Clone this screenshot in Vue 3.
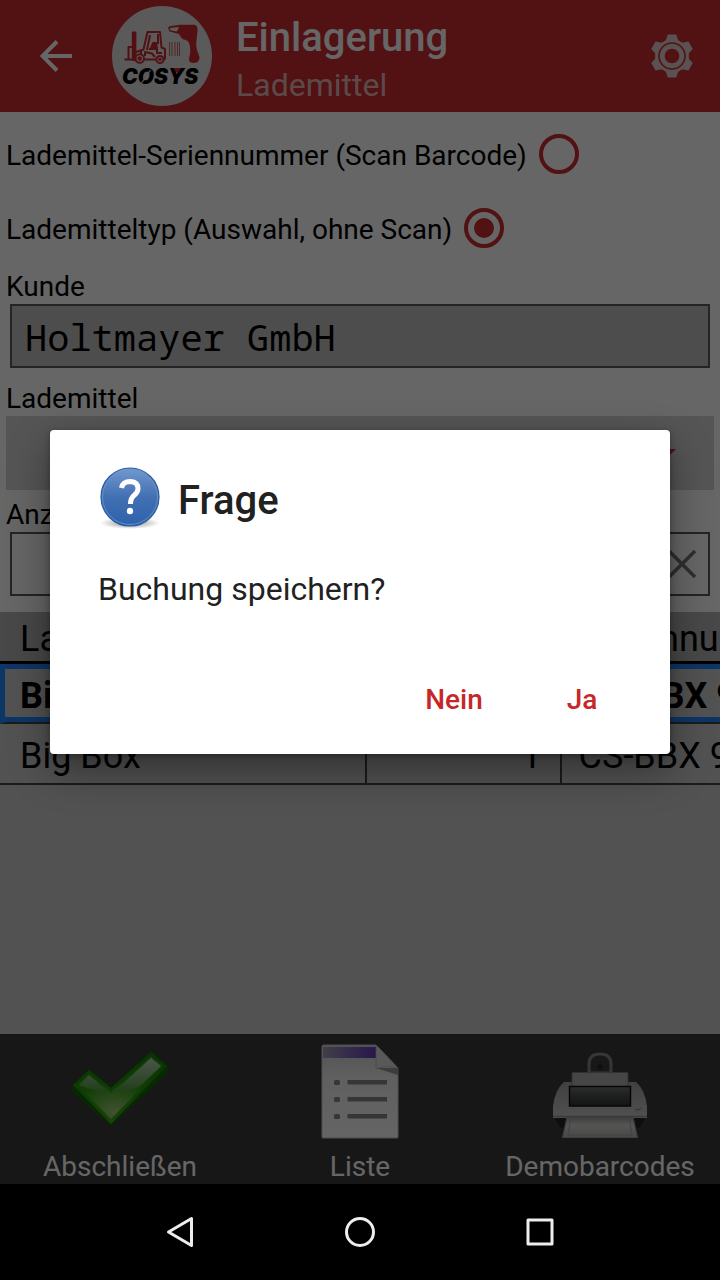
<template>
  <div class="device">
    <div class="app">
      <header class="app-bar">
        <button class="bar-btn back-btn" type="button" aria-label="Zurück">
          <svg viewBox="0 0 32 32" width="32" height="32">
            <path d="M32 16H3M17 1.500L2.500 16 17 30.500" fill="none" stroke="#fff" stroke-width="4" />
          </svg>
        </button>
        <svg class="logo" viewBox="0 0 100 100" width="100" height="100" role="img" aria-label="COSYS">
          <circle cx="50" cy="50" r="50" fill="#e2e2e2" />
          <!-- Stapler -->
          <g fill="none" stroke="#cf2a30" stroke-width="2" stroke-linejoin="round">
            <path d="M12.500 53.500H20M16.500 53V41H20" />
            <path d="M20.800 54V26.500H23.400V54Z" fill="#cf2a30" />
            <path d="M24 46L31.500 43.500 35.500 26H48L49.500 41.500 53 43V52.500L51.500 54M29 44V48M38 29L35 44M46 28V38" />
            <path d="M32.500 53.500H44M33 50V46L40 47.500 43 51M37 43H45V47H50" />
            <path d="M41 37H44L45 42H39Z" fill="#cf2a30" />
            <circle cx="27.700" cy="52.500" r="4.300" />
            <circle cx="27.700" cy="52.500" r="1.200" />
            <circle cx="48" cy="53.500" r="3.600" />
            <circle cx="48" cy="53.500" r="0.800" />
          </g>
          <!-- Strichcode -->
          <path d="M57.500 36V50M60 36V50M63 36V50M65.500 36V50M67.500 36V50" stroke="#cf6a66" stroke-width="1.100" />
          <!-- Handscanner -->
          <path
            d="M56 21.500Q57 20 61 19.800L68 18.800H82Q86 19 85.500 25L84.500 34Q83.500 39 85 44L87.500 51Q88 56.500 82 57Q76.500 57 77 53Q79.500 43 77 37Q76 34 72 33.500Q69.500 33 67 28L57.500 25.500Z"
            fill="#cf2a30"
          />
          <path d="M58 22L67 21 65 25.500 58.500 24.500Z" fill="#e2e2e2" />
          <text class="logo-text" x="10" y="78">COSYS</text>
          <path d="M29.500 77L38.500 64" stroke="#e2e2e2" stroke-width="1.200" />
          <path d="M61 62H69L65 67Z" fill="#cf2a30" />
        </svg>
        <div class="app-titles">
          <h1>Einlagerung</h1>
          <p>Lademittel</p>
        </div>
        <button class="bar-btn" type="button" aria-label="Einstellungen">
          <svg viewBox="-22 -22 44 44" width="44" height="44">
            <g fill="#e0cccc">
              <path
                v-for="angle in gearAngles"
                :key="angle"
                d="M-4 -21H4L5.500 -16 9 -13H-9L-5.500 -16Z"
                stroke="#e0cccc"
                stroke-linejoin="round"
                :transform="`rotate(${angle})`"
              />
              <circle r="16" />
            </g>
            <circle r="13" fill="none" stroke="#cd2b30" stroke-width="1.600" />
            <circle r="7.300" fill="#cd2b30" />
          </svg>
        </button>
      </header>

      <main class="content">
        <form class="booking-form" @submit.prevent>
          <label v-for="mode in modes" :key="mode.value" class="mode-row">
            <span>{{ mode.label }}</span>
            <input v-model="selectedMode" type="radio" name="mode" :value="mode.value" />
          </label>

          <label class="field-label first" for="customer">Kunde</label>
          <input id="customer" class="field readonly" type="text" value="Holtmayer GmbH" readonly />

          <label class="field-label" for="carrier">Lademittel</label>
          <div class="select-wrap">
            <select id="carrier">
              <option>Big Box</option>
            </select>
            <svg class="select-arrow" viewBox="0 0 40 20" width="40" height="20" aria-hidden="true">
              <path d="M0 0H40L20 20Z" fill="#cd2b45" />
            </svg>
          </div>

          <label class="field-label tight" for="amount">Anzahl</label>
          <div class="amount-wrap">
            <input id="amount" class="field" type="text" value="1" />
            <button class="clear-btn" type="button" aria-label="Löschen">
              <svg viewBox="0 0 28 28" width="28" height="28">
                <path d="M1 1L27 27M27 1L1 27" stroke="#777" stroke-width="3.500" />
              </svg>
            </button>
          </div>
        </form>

        <div class="table-wrap">
          <table>
            <thead>
              <tr>
                <th class="col-type">Lademittel</th>
                <th class="col-count">Anzahl</th>
                <th>Seriennummer</th>
              </tr>
            </thead>
            <tbody>
              <tr v-for="(row, index) in rows" :key="index" :class="{ 'is-selected': index === selectedRow }">
                <td>{{ row.type }}</td>
                <td class="col-count">{{ row.count }}</td>
                <td>{{ row.serial }}</td>
              </tr>
            </tbody>
          </table>
        </div>
      </main>

      <footer class="action-bar">
        <button class="action" type="button">
          <svg viewBox="0 0 96 96" width="96" height="96" aria-hidden="true">
            <defs>
              <linearGradient id="check-body" x1="0" y1="0" x2="0" y2="1">
                <stop offset="0" stop-color="#177d08" />
                <stop offset="0.600" stop-color="#239a06" />
                <stop offset="1" stop-color="#46a51c" />
              </linearGradient>
              <linearGradient id="check-gloss" x1="0" y1="0" x2="0" y2="1">
                <stop offset="0" stop-color="#c0d4bc" />
                <stop offset="1" stop-color="#4a9a38" />
              </linearGradient>
              <radialGradient id="check-glow" cx="0.450" cy="0.900" r="0.500">
                <stop offset="0" stop-color="#a5cc7d" />
                <stop offset="1" stop-color="#2b9a0c" />
              </radialGradient>
            </defs>
            <path d="M0 42L17 25 39 43 79 7 96 22V29L39 82 0 48Z" fill="#126505" />
            <path d="M1 41L17 26 39 44 79 8 95 22 39 80Z" fill="url(#check-body)" />
            <path d="M5 41L17 29 39 48 79 12 91 22 39 75Z" fill="url(#check-glow)" />
            <path d="M7 41L17 31 39 50 79 14 89 22 67 43Q36 54 7 41Z" fill="url(#check-gloss)" />
          </svg>
          <span>Abschließen</span>
        </button>
        <button class="action" type="button">
          <svg viewBox="0 0 96 96" width="96" height="96" aria-hidden="true">
            <defs>
              <linearGradient id="sheet-band">
                <stop offset="0" stop-color="#a59cbb" />
                <stop offset="1" stop-color="#643bb8" />
              </linearGradient>
              <linearGradient id="sheet-body" x1="0" y1="0" x2="0" y2="1">
                <stop offset="0" stop-color="#cfcfcf" />
                <stop offset="0.350" stop-color="#efefef" />
                <stop offset="1" stop-color="#fafafa" />
              </linearGradient>
            </defs>
            <path d="M11 1H64L86 24V93Q86 94 85 94H11Q10 94 10 93V2Z" fill="url(#sheet-body)" stroke="#c4c4c4" />
            <path d="M11 3H64V14H11Z" fill="url(#sheet-band)" />
            <path d="M64 24L86 31V24Z" fill="#999" />
            <path d="M64 1L86 24Q74 21 64 25Z" fill="#dedede" stroke="#b8b8b8" stroke-width="0.800" />
            <g v-for="y in [36, 53, 70]" :key="y" fill="#888">
              <rect x="22" :y="y" width="6" height="5" rx="1.500" />
              <rect x="35.500" :y="y" width="39.500" height="4.500" />
            </g>
          </svg>
          <span>Liste</span>
        </button>
        <button class="action" type="button">
          <svg viewBox="0 0 96 96" width="96" height="96" aria-hidden="true">
            <defs>
              <linearGradient id="printer-body" x1="0" y1="0" x2="0" y2="1">
                <stop offset="0" stop-color="#a0a2a0" />
                <stop offset="1" stop-color="#c8c8c6" />
              </linearGradient>
              <linearGradient id="printer-window" x1="0" y1="0" x2="0" y2="1">
                <stop offset="0" stop-color="#707674" />
                <stop offset="0.450" stop-color="#4d5352" />
                <stop offset="1" stop-color="#303636" />
              </linearGradient>
              <linearGradient id="printer-tray" x1="0" y1="0" x2="0" y2="1">
                <stop offset="0" stop-color="#999" />
                <stop offset="0.400" stop-color="#d4d4d2" />
                <stop offset="1" stop-color="#b5b5b3" />
              </linearGradient>
            </defs>
            <path d="M37 29V20Q37 10 48 10T59 20V29Z" fill="#3a3c3a" stroke="#888" stroke-width="3" />
            <circle cx="48" cy="23" r="3" fill="#2a2a2a" />
            <path d="M3 74H93L88 84H8Z" fill="#242424" />
            <path d="M1 74V62Q3 46 12 38H84Q93 46 95 62V74Z" fill="url(#printer-body)" />
            <path d="M20 28.500H76V43H20Z" fill="#b0b0ae" stroke="#777" stroke-width="0.800" />
            <path d="M17.500 42.500H78.500V62H17.500Z" fill="url(#printer-window)" stroke="#111" stroke-width="1.500" />
            <path d="M1 72.500H95" stroke="#929290" stroke-width="1.500" />
            <path d="M83 65Q86 67 89 64" fill="none" stroke="#888" stroke-width="1.200" />
            <path d="M15 73H81L85.500 93.500H10.500Z" fill="url(#printer-tray)" stroke="#999" />
            <path d="M19 74L16 91H80L77 74" fill="none" stroke="#a4a4a2" />
          </svg>
          <span>Demobarcodes</span>
        </button>
      </footer>

      <div v-if="dialogOpen" class="scrim">
        <section class="dialog" role="alertdialog" aria-labelledby="dialog-title" aria-describedby="dialog-text">
          <div class="dialog-head">
            <svg viewBox="0 0 64 64" width="64" height="64" aria-hidden="true">
              <defs>
                <linearGradient id="ask-ball" x1="0" y1="0" x2="0" y2="1">
                  <stop offset="0" stop-color="#7299cf" />
                  <stop offset="0.500" stop-color="#4270b2" />
                  <stop offset="1" stop-color="#2d62ac" />
                </linearGradient>
                <radialGradient id="ask-shadow">
                  <stop offset="0.400" stop-color="#888" stop-opacity="0.600" />
                  <stop offset="1" stop-color="#888" stop-opacity="0" />
                </radialGradient>
              </defs>
              <ellipse cx="32" cy="57" rx="30" ry="6" fill="url(#ask-shadow)" />
              <circle cx="32" cy="31" r="29" fill="url(#ask-ball)" stroke="#2c5b9e" stroke-width="1.200" />
              <circle cx="32" cy="31" r="27.500" fill="none" stroke="#6f97cc" stroke-width="0.800" />
              <path
                d="M23.500 22Q24.500 15.500 32.500 15.500Q40 16 40 22.500Q40 26 36.500 29Q32.500 32 32.500 38"
                fill="none"
                stroke="#fff"
                stroke-width="5"
              />
              <circle cx="32" cy="45" r="3.200" fill="#fff" />
            </svg>
            <h2 id="dialog-title">Frage</h2>
          </div>
          <p id="dialog-text" class="dialog-text">Buchung speichern?</p>
          <div class="dialog-actions">
            <button type="button" @click="dialogOpen = false">Nein</button>
            <button type="button" @click="dialogOpen = false">Ja</button>
          </div>
        </section>
      </div>
    </div>

    <nav class="system-nav" aria-label="System">
      <button type="button" aria-label="Zurück">
        <svg viewBox="0 0 32 32" width="32" height="32">
          <path d="M27.500 2.500V29.500L4.500 16Z" />
        </svg>
      </button>
      <button type="button" aria-label="Startseite">
        <svg viewBox="0 0 32 32" width="32" height="32">
          <circle cx="16" cy="16" r="13.500" />
        </svg>
      </button>
      <button type="button" aria-label="Übersicht">
        <svg viewBox="0 0 32 32" width="32" height="32">
          <rect x="4" y="4" width="24" height="24" />
        </svg>
      </button>
    </nav>
  </div>
</template>

<script setup>
import { ref } from "vue";

const modes = [
  { value: "serial", label: "Lademittel-Seriennummer (Scan Barcode)" },
  { value: "type", label: "Lademitteltyp (Auswahl, ohne Scan)" }
];

const rows = [
  { type: "Big Box", count: 1, serial: "CS-BBX 9" },
  { type: "Big Box", count: 1, serial: "CS-BBX 9" }
];

const gearAngles = [0, 60, 120, 180, 240, 300];

const selectedMode = ref("type");
const selectedRow = ref(0);
const dialogOpen = ref(true);
</script>

<style>
body {
  margin: 0;
  background: #000;
}
</style>

<style scoped>
.device {
  min-height: 100vh;
  display: flex;
  flex-direction: column;
  font-family: Roboto, "Liberation Sans", sans-serif;
  font-size: 28px;
  color: #000;
}

.device *,
.device *::before {
  box-sizing: border-box;
}

button {
  border: 0;
  padding: 0;
  background: none;
  font: inherit;
  color: inherit;
}

svg {
  display: block;
}

.app {
  position: relative;
  flex: 1;
  display: flex;
  flex-direction: column;
  background: #cecece;
}

.app-bar {
  display: flex;
  align-items: center;
  height: 112px;
  background: #cd2b30;
  color: #fff;
}

.bar-btn {
  display: grid;
  place-items: center;
  width: 96px;
  height: 96px;
}

.back-btn {
  width: 112px;
}

.logo-text {
  font: italic 900 21px Inter, sans-serif;
  fill: #000;
}

.app-titles {
  flex: 1;
  padding: 10px 0 0 24px;
}

.app-titles h1 {
  margin: 0;
  font-size: 40px;
  font-weight: 500;
  line-height: 48px;
}

.app-titles p {
  margin: 0;
  font-size: 32px;
  line-height: 46px;
  color: #e6b8ba;
}

.content {
  flex: 1;
}

.booking-form {
  display: flex;
  flex-direction: column;
  padding: 5px 6px 16px;
  background: #fff;
}

.mode-row {
  display: flex;
  align-items: center;
  gap: 12px;
  height: 74px;
}

.mode-row span {
  padding-top: 2px;
}

.mode-row input {
  appearance: none;
  display: grid;
  place-items: center;
  width: 40px;
  height: 40px;
  margin: 0;
  border: 4px solid #cd2b30;
  border-radius: 50%;
}

.mode-row input:checked::before {
  content: "";
  width: 20px;
  height: 20px;
  border-radius: 50%;
  background: #cd2b30;
}

.field-label {
  margin-top: 14px;
  line-height: 34px;
}

.field-label.first {
  margin-top: 5px;
}

.field-label.tight {
  margin-top: 8px;
}

.field {
  flex: 1 1 auto;
  min-width: 0;
  height: 64px;
  margin: 0 4px;
  padding: 0 13px;
  border: 2px solid #5a5a5a;
  background: #fff;
  font: 37px "Noto Sans Mono", "DejaVu Sans Mono", monospace;
  color: #000;
}

.field.readonly {
  flex: none;
  background: #c0c0c0;
}

.select-wrap {
  display: grid;
  align-items: center;
}

.select-wrap > * {
  grid-area: 1 / 1;
}

.select-wrap select {
  appearance: none;
  width: 100%;
  height: 74px;
  padding: 0 54px;
  border: 0;
  border-radius: 0;
  background: #d4d4d4;
  font: inherit;
  font-size: 36px;
  color: #000;
}

.select-arrow {
  justify-self: end;
  margin: 12px 38px 0 0;
}

.amount-wrap {
  display: grid;
  align-items: center;
}

.amount-wrap > * {
  grid-area: 1 / 1;
}

.amount-wrap .field {
  padding-left: 54px;
}

.clear-btn {
  justify-self: end;
  margin-right: 18px;
}

.table-wrap {
  overflow: hidden;
}

table {
  width: 100%;
  table-layout: fixed;
  border-collapse: separate;
  border-spacing: 0;
  font-size: 36px;
  line-height: 42px;
}

th,
td {
  height: 61px;
  padding: 4px 0 0 20px;
  border-bottom: 2px solid #444;
  font-weight: 400;
  text-align: left;
  white-space: nowrap;
  overflow: hidden;
}

th {
  height: 52px;
  border-bottom: 3px solid #000;
  background: #b4b4b4;
}

td:not(:last-child) {
  border-right: 2px solid #444;
}

th:last-child,
td:last-child {
  padding-left: 17px;
}

th.col-count,
td.col-count {
  padding-right: 18px;
  text-align: right;
}

.col-type {
  width: 51%;
}

.col-count {
  width: 27%;
}

.is-selected td {
  height: 60px;
  padding-top: 0;
  border-top: 5px solid #1e88ff;
  box-shadow: inset 0 -5px #1e88ff;
  font-weight: 700;
}

.is-selected td:first-child {
  padding-left: 15px;
  border-left: 5px solid #1e88ff;
}

.action-bar {
  display: flex;
  height: 150px;
  background: #3a3a3a;
  color: #fff;
}

.action {
  flex: 1;
  display: flex;
  flex-direction: column;
  align-items: center;
  gap: 10px;
  padding-top: 10px;
  line-height: 34px;
}

.scrim {
  position: absolute;
  inset: 0;
  display: flex;
  align-items: center;
  justify-content: center;
  padding: 0 50px;
  background: rgba(0, 0, 0, 0.6);
}

.dialog {
  flex: 1;
  padding: 36px 24px 19px 48px;
  border-radius: 4px;
  background: #fff;
  box-shadow: 0 16px 40px rgba(0, 0, 0, 0.4), 0 2px 6px rgba(0, 0, 0, 0.3);
  color: #212121;
}

.dialog-head {
  display: flex;
  align-items: center;
  gap: 16px;
}

.dialog-head h2 {
  margin: 0;
  padding-top: 6px;
  font-size: 40px;
  font-weight: 500;
  line-height: 48px;
}

.dialog-text {
  margin: 40px 0 55px;
  font-size: 32px;
  line-height: 38px;
}

.dialog-actions {
  display: flex;
  justify-content: flex-end;
}

.dialog-actions button {
  width: 128px;
  height: 72px;
  font-weight: 500;
  color: #c62828;
}

.system-nav {
  display: flex;
  justify-content: center;
  height: 96px;
  background: #000;
}

.system-nav button {
  display: grid;
  place-items: center;
  width: 25%;
}

.system-nav svg {
  fill: none;
  stroke: #eee;
  stroke-width: 3;
  stroke-linejoin: round;
}
</style>
